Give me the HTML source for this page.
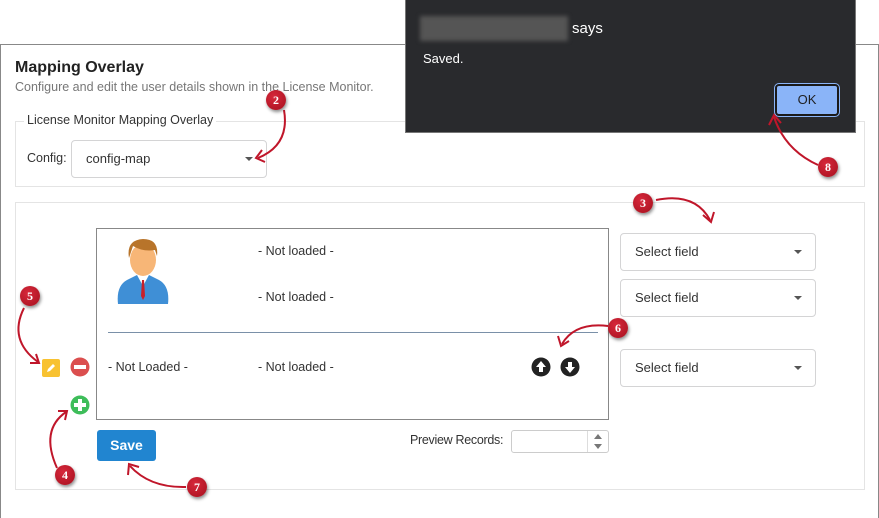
<!DOCTYPE html>
<html><head><style>
*{box-sizing:border-box;margin:0;padding:0}
body{width:879px;height:518px;position:relative;background:#fff;font-family:"Liberation Sans",sans-serif;overflow:hidden;color:#333}
.a{position:absolute}
.sel{position:absolute;border:1px solid #d4d4d5;border-radius:4px;background:#fff;font-size:13px;color:#333;padding-left:14px;line-height:35px}
.sel:after{content:"";position:absolute;right:13px;top:16px;border-left:4px solid transparent;border-right:4px solid transparent;border-top:4px solid #555}
.t{position:absolute;font-size:12.5px;color:#333}
.b{position:absolute;width:20px;height:20px;border-radius:50%;background:radial-gradient(circle at 40% 35%,#d7283b,#a5101e);color:#fff;font:bold 12px "Liberation Serif",serif;text-align:center;line-height:20px;box-shadow:1px 2px 3px rgba(0,0,0,.45)}
</style></head><body>
<div class="a" style="left:0;top:44px;width:879px;height:474px;border:1px solid #888;border-bottom:none"></div>
<div class="a" style="left:15px;top:59px;font-size:16px;font-weight:bold;color:#222">Mapping Overlay</div>
<div class="a" style="left:15px;top:80px;font-size:12.5px;color:#777">Configure and edit the user details shown in the License Monitor.</div>
<div class="a" style="left:15px;top:121px;width:850px;height:66px;border:1px solid #e4e4e4"></div>
<div class="a" style="left:24px;top:113px;background:#fff;padding:0 3px;font-size:12.5px;color:#333">License Monitor Mapping Overlay</div>
<div class="t" style="left:27px;top:151px">Config:</div>
<div class="sel" style="left:71px;top:140px;width:196px;height:38px;line-height:36px">config-map</div>
<div class="a" style="left:15px;top:202px;width:850px;height:288px;border:1px solid #e4e4e4"></div>
<div class="a" style="left:96px;top:228px;width:513px;height:192px;border:1px solid #888"></div>
<div class="a" style="left:108px;top:332px;width:490px;height:1px;background:#7a90a8"></div>
<svg class="a" style="left:113px;top:236px" width="60" height="70" viewBox="0 0 60 70">
<path d="M5 68 Q3 50 14 44 L24 39 L36 39 L46 44 Q57 50 55 68 Z" fill="#3f8fd6"/>
<path d="M24 39 L30 50 L36 39 Z" fill="#fff"/><path d="M29 44 L31 44 L32 60 L30 64 L28 60 Z" fill="#c8202a"/>
<ellipse cx="30" cy="24" rx="13" ry="16" fill="#f7b677"/>
<path d="M16 22 Q13 4 30 3 Q46 3 44 20 L42 14 Q30 16 20 10 Z" fill="#b8742a"/>
</svg>
<div class="t" style="left:258px;top:244px">- Not loaded -</div>
<div class="t" style="left:258px;top:290px">- Not loaded -</div>
<div class="t" style="left:108px;top:360px">- Not Loaded -</div>
<div class="t" style="left:258px;top:360px">- Not loaded -</div>
<svg class="a" style="left:531px;top:357px" width="50" height="20"><circle cx="10" cy="10" r="9.5" fill="#222"/><path d="M10 4 L15 10 H12 V15 H8 V10 H5 Z" fill="#fff"/><circle cx="39" cy="10" r="9.5" fill="#222"/><path d="M39 16 L44 10 H41 V5 H37 V10 H34 Z" fill="#fff"/></svg>
<div class="sel" style="left:620px;top:233px;width:196px;height:38px">Select field</div>
<div class="sel" style="left:620px;top:279px;width:196px;height:38px">Select field</div>
<div class="sel" style="left:620px;top:349px;width:196px;height:38px">Select field</div>
<div class="a" style="left:42px;top:359px;width:18px;height:18px;background:#f8c231;border-radius:2px"><svg width="18" height="18"><path d="M5 13 L6 10 L11 5 L13 7 L8 12 Z" fill="#fff"/></svg></div>
<svg class="a" style="left:70px;top:357px" width="20" height="60"><circle cx="10" cy="10" r="9.5" fill="#db4f4f"/><rect x="4" y="8" width="12" height="4" fill="#fff"/><circle cx="10" cy="48" r="9.5" fill="#3ebd5a"/><rect x="4" y="46" width="12" height="4" fill="#fff"/><rect x="8" y="42" width="4" height="12" fill="#fff"/></svg>
<div class="a" style="left:97px;top:430px;width:59px;height:31px;background:#2185d0;border-radius:3px;color:#fff;font-weight:bold;font-size:14px;text-align:center;line-height:31px">Save</div>
<div class="t" style="left:410px;top:433px;letter-spacing:-0.3px">Preview Records:</div>
<div class="a" style="left:511px;top:430px;width:98px;height:23px;border:1px solid #ccc;border-radius:3px"><div class="a" style="left:75px;top:0;width:1px;height:21px;background:#ddd"></div><div class="a" style="left:82px;top:3px;border:4px solid transparent;border-bottom:5px solid #777;border-top:none"></div><div class="a" style="left:82px;top:13px;border:4px solid transparent;border-top:5px solid #777;border-bottom:none"></div></div>
<div class="a" style="left:405px;top:0;width:451px;height:133px;background:#292a2d;border:1px solid #777;border-top:none"></div>
<div class="a" style="left:420px;top:16px;width:148px;height:25px;background:#555;filter:blur(2px)"></div>
<div class="a" style="left:572px;top:20px;color:#fff;font-size:15px">says</div>
<div class="a" style="left:423px;top:51px;color:#fff;font-size:13px">Saved.</div>
<div class="a" style="left:775px;top:84px;width:64px;height:32px;background:#8ab4f8;border:2px solid #1a1a1a;outline:1px solid #8ab4f8;border-radius:4px;color:#202124;font-size:13px;text-align:center;line-height:28px">OK</div>
<svg class="a" style="left:0;top:0" width="879" height="518" fill="none" stroke="#c0162a" stroke-width="2">
<path d="M284 110 Q290 145 258 158"/><path d="M262 150 L256 158 L265 162"/>
<path d="M656 200 Q695 192 710 220"/><path d="M703 215 L711 222 L714 212"/>
<path d="M24 308 Q8 340 38 362"/><path d="M30 363 L39 363 L36 354"/>
<path d="M608 326 Q575 322 562 344"/><path d="M558 336 L561 346 L569 341"/>
<path d="M818 165 Q785 150 774 117"/><path d="M769 125 L774 115 L781 123"/>
<path d="M57 468 Q40 430 66 412"/><path d="M58 411 L67 411 L65 420"/>
<path d="M186 487 Q150 488 130 466"/><path d="M128 475 L129 464 L139 467"/>
</svg>
<div class="b" style="left:266px;top:90px">2</div>
<div class="b" style="left:633px;top:193px">3</div>
<div class="b" style="left:20px;top:286px">5</div>
<div class="b" style="left:608px;top:318px">6</div>
<div class="b" style="left:818px;top:157px">8</div>
<div class="b" style="left:55px;top:465px">4</div>
<div class="b" style="left:187px;top:477px">7</div>
</body></html>
